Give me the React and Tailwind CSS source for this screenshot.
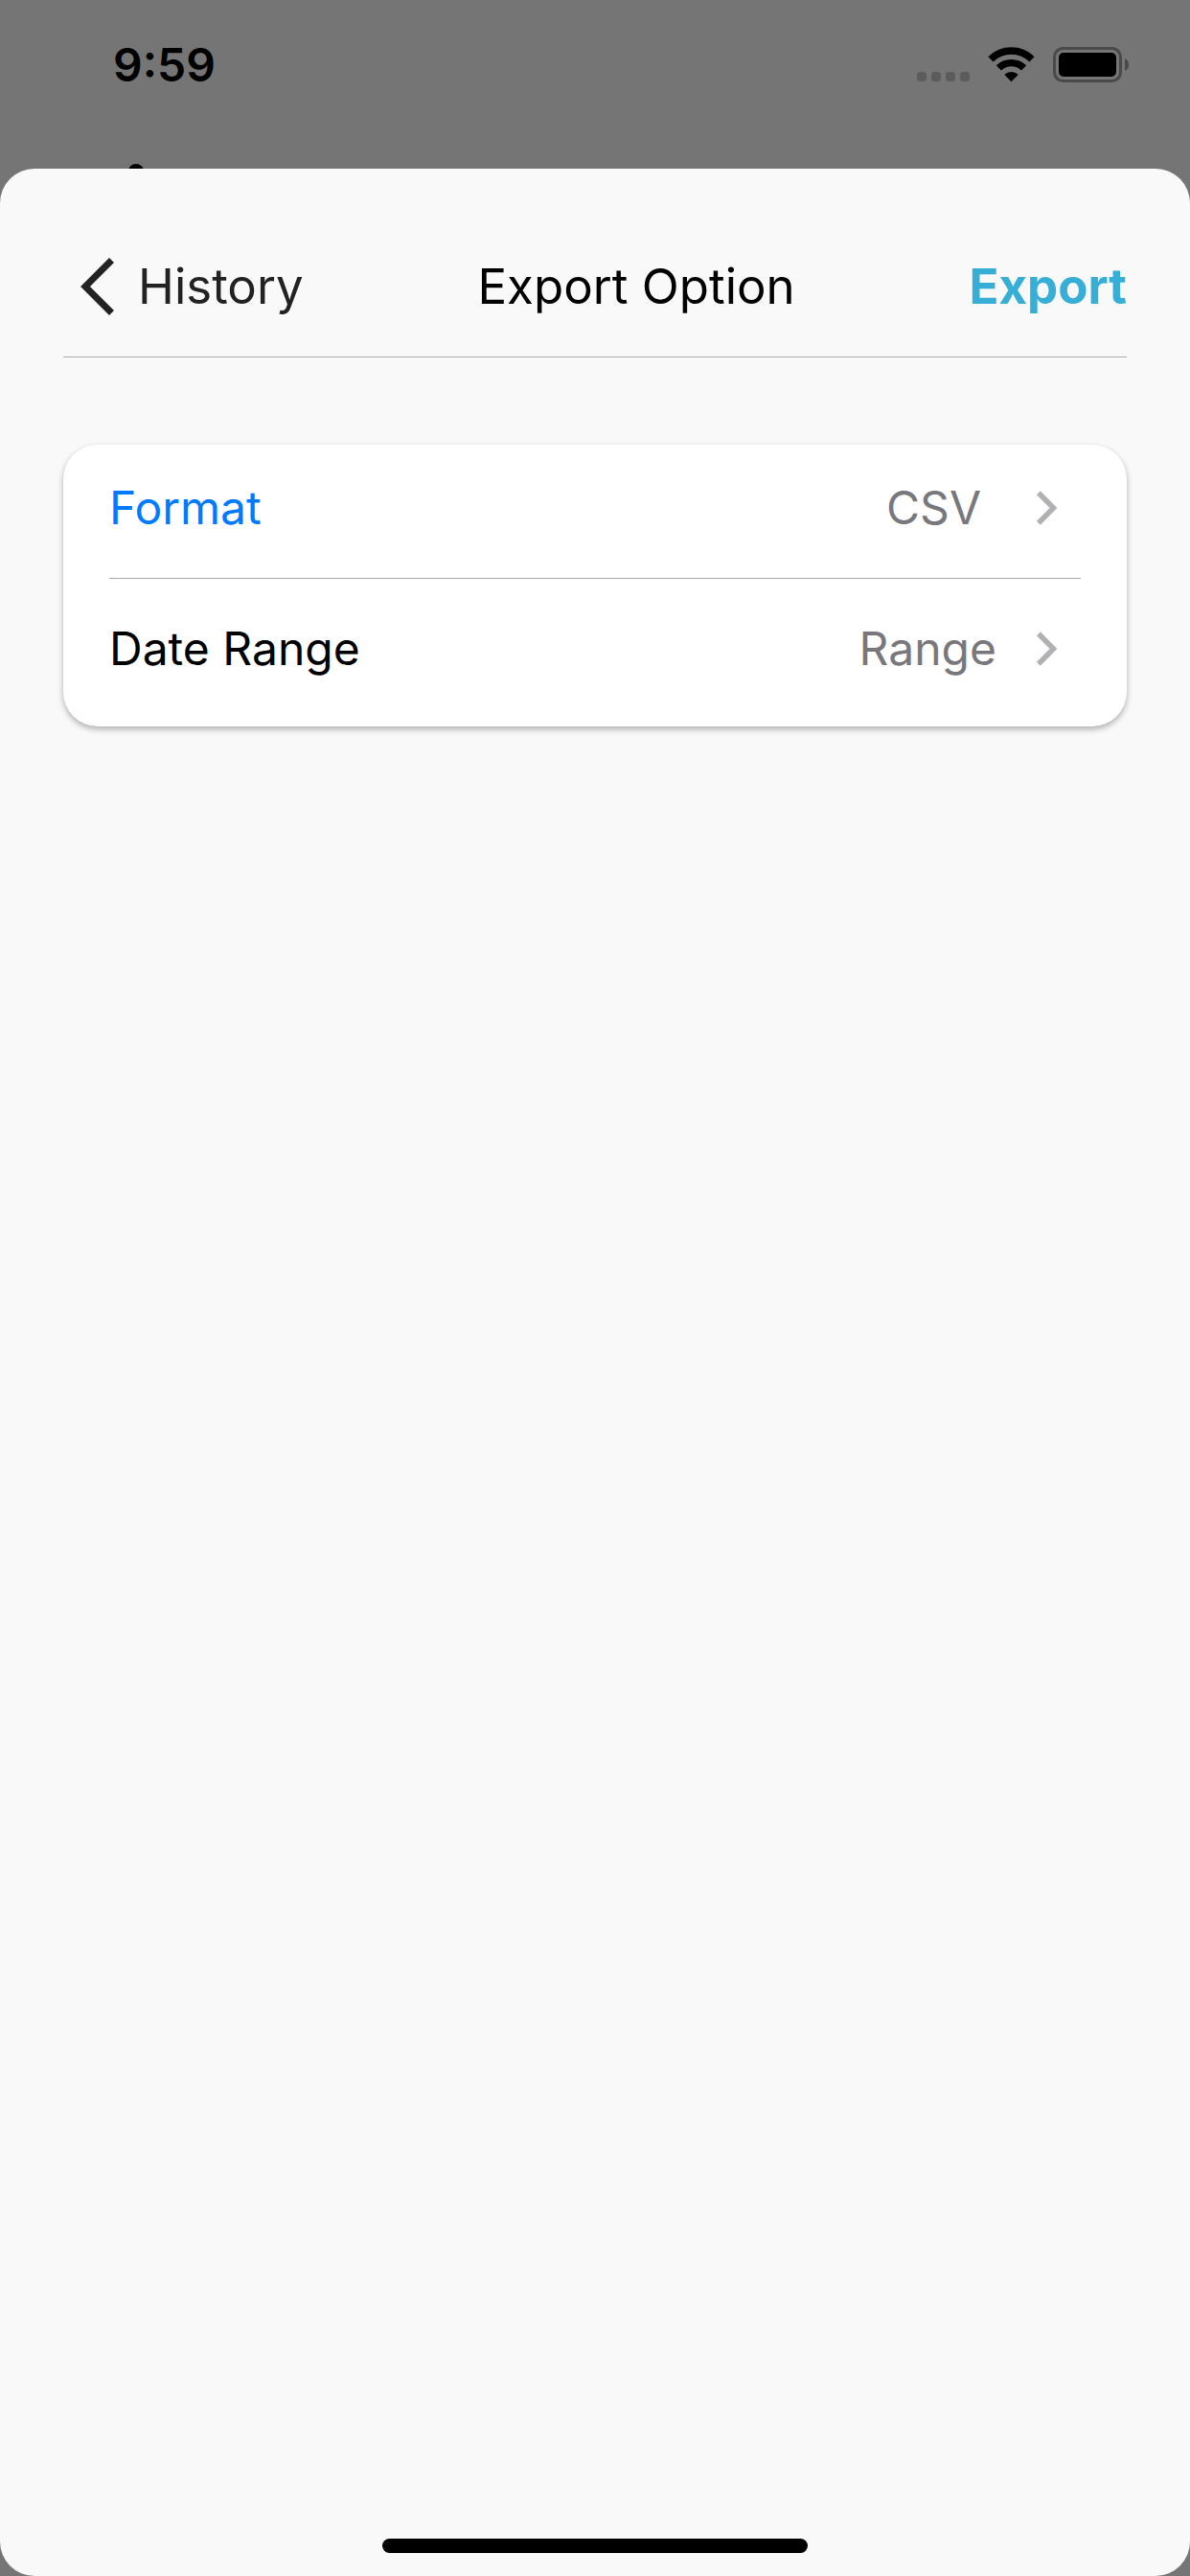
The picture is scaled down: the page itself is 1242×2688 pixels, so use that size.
import React from "react";

function StatusBar() {
  return (
    <header className="relative flex h-[176px] shrink-0 items-start justify-between overflow-hidden pr-16 pl-[118px] text-black">
      <time className="mt-[38px] text-[48px] leading-[60px] font-semibold">9:59</time>
      <div className="mt-[49px] flex items-start">
        <svg width="56" height="38" viewBox="0 0 56 38" fill="#5c5c5c" role="img" aria-label="No signal">
          <rect x="1" y="26" width="10" height="10" rx="3.5" />
          <rect x="16" y="26" width="10" height="10" rx="3.5" />
          <rect x="31" y="26" width="10" height="10" rx="3.5" />
          <rect x="46" y="26" width="10" height="10" rx="3.5" />
        </svg>
        <svg className="ml-[19px]" width="49" height="37" viewBox="0 0 49 37" role="img" aria-label="Wi-Fi">
          <g fill="none" stroke="#000" strokeWidth="7.4">
            <path d="M3 12.9A30.5 30.5 0 0 1 46 12.9" />
            <path d="M11.4 21.9A18.8 18.8 0 0 1 37.6 21.9" />
          </g>
          <path d="M17.6 29.3Q17.6 28.6 18.4 28A10 10 0 0 1 30.6 28Q31.4 28.6 31.4 29.3L24.5 36.3Z" />
        </svg>
        <svg className="ml-[18px]" width="80" height="38" viewBox="0 0 80 38" role="img" aria-label="Battery full">
          <rect x="2.5" y="1.5" width="69" height="34" rx="9" fill="none" stroke="#494949" strokeWidth="3" />
          <rect x="7" y="6" width="60" height="25" rx="5" />
          <path d="M76 12Q80 14 80 18.5Q80 23 76 25Z" fill="#494949" />
        </svg>
      </div>
      <span className="absolute top-[171px] left-[134px] size-4 rounded-full bg-black" />
    </header>
  );
}

function SettingRow({ label, value, labelClass, valueClass, rowClass }) {
  return (
    <button type="button" className={`flex w-full items-center gap-10 text-left text-[48px] leading-[60px] ${rowClass}`}>
      <span className={labelClass}>{label}</span>
      <span className={`ml-auto text-[#78787c] ${valueClass}`}>{value}</span>
      <svg className="mr-6 shrink-0" width="24" height="38" viewBox="0 0 24 38" fill="none" stroke="#b1b1b4" strokeWidth="5.5" aria-hidden="true">
        <path d="M3.900 3.300L19.500 19L3.900 34.700" />
      </svg>
    </button>
  );
}

export default function App() {
  return (
    <div className="flex min-h-screen flex-col bg-[#757575] font-['Inter',sans-serif]">
      <StatusBar />
      <main className="flex flex-1 flex-col rounded-[36px] bg-[#f9f9f9] px-[66px]">
        <nav className="flex items-center justify-between border-b border-[#a9a9a9] pt-[88px] pb-[38px] text-[51px] leading-[70px]">
          <button type="button" className="flex items-center gap-6 pl-[18px] text-[#222]">
            <svg width="36" height="60" viewBox="0 0 36 60" fill="none" stroke="#222" strokeWidth="7" aria-hidden="true">
              <path d="M32.500 2.500L5 30L32.500 57.500" />
            </svg>
            History
          </button>
          <h1 className="text-black">Export Option</h1>
          <button type="button" className="font-bold text-[#36aed5]">Export</button>
        </nav>
        <section className="mt-[91px] rounded-[36px] bg-white px-12 shadow-[0_3px_6px_rgba(0,0,0,0.3)]">
          <SettingRow
            label="Format"
            value="CSV"
            labelClass="text-[#007aff]"
            valueClass="pr-4"
            rowClass="border-b border-[#a9a9a9] pt-9 pb-[43px]"
          />
          <SettingRow
            label="Date Range"
            value="Range"
            labelClass="text-black"
            valueClass=""
            rowClass="pt-[43px] pb-[51px]"
          />
        </section>
        <div className="mx-auto mt-auto mb-6 h-[15px] w-[444px] rounded-full bg-black" />
      </main>
    </div>
  );
}
